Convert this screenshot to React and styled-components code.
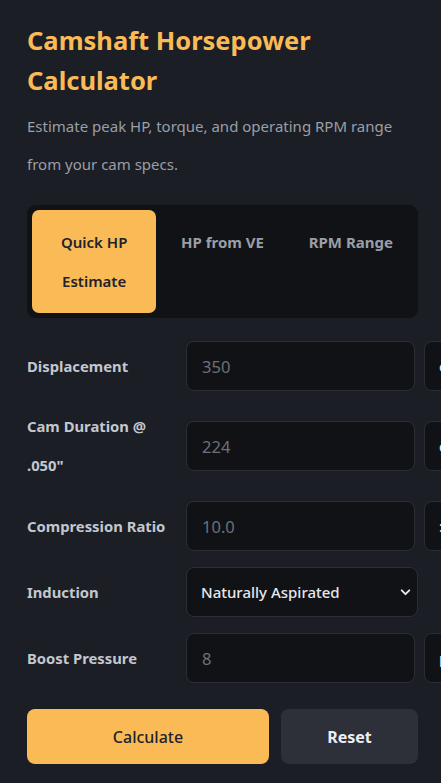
import React, { useState } from 'react';
import styled, { createGlobalStyle } from 'styled-components';

const pageBg = '#1b1e25';
const panelBg = '#111216';
const fieldBorder = '#2b2e36';
const accent = '#fabb57';
const darkText = '#20232a';
const labelColor = '#c4c7ce';
const mutedColor = '#9a9ea7';

const GlobalStyle = createGlobalStyle`
  html, body {
    margin: 0;
    background: ${pageBg};
    overflow-x: hidden;
  }
  body {
    font-family: "Noto Sans", "Open Sans", sans-serif;
  }
  * {
    box-sizing: border-box;
  }
`;

const Page = styled.div`
  padding: 20px 23px 24px 27px;
  min-height: 783px;
`;

const Title = styled.h1`
  margin: 0;
  color: ${accent};
  font-size: 25.5px;
  font-weight: 700;
  line-height: 40px;
`;

const Subtitle = styled.p`
  margin: 7px 0 0;
  color: ${mutedColor};
  font-size: 15px;
  line-height: 38px;
`;

const Tabs = styled.div`
  display: flex;
  gap: 4px;
  margin-top: 22px;
  padding: 5px;
  background: ${panelBg};
  border-radius: 9px;
`;

const Tab = styled.button`
  flex: 1;
  padding: 13px 6px 12px;
  border: none;
  border-radius: 7px;
  background: ${(p) => (p.$active ? accent : 'transparent')};
  color: ${(p) => (p.$active ? darkText : mutedColor)};
  font-family: inherit;
  font-size: 15px;
  font-weight: ${(p) => (p.$active ? 600 : 700)};
  line-height: 39px;
  display: flex;
  align-items: flex-start;
  justify-content: center;
  text-align: center;
`;

const Form = styled.div`
  display: flex;
  flex-direction: column;
  gap: 16px;
  margin-top: 23px;
`;

const Row = styled.div`
  display: flex;
  align-items: center;
`;

const Label = styled.label`
  flex: 0 0 150px;
  margin-right: 9px;
  color: ${labelColor};
  font-size: 14.8px;
  font-weight: 700;
  line-height: 39px;
`;

const Field = styled.input`
  flex: none;
  width: 229px;
  min-width: 229px;
  height: 50px;
  padding: 0 15px;
  background: ${panelBg};
  border: 1px solid ${fieldBorder};
  border-radius: 8px;
  color: #e6e8ec;
  font-family: inherit;
  font-size: 16.5px;
  outline: none;

  &::placeholder {
    color: #6d7078;
  }
`;

const UnitSelect = styled.select`
  flex: none;
  width: 80px;
  min-width: 80px;
  margin-left: 9px;
  height: 50px;
  padding: 0 14px;
  background: ${panelBg};
  border: 1px solid ${fieldBorder};
  border-radius: 8px;
  color: #e6e8ec;
  font-family: inherit;
  font-size: 15px;
  font-weight: 500;
  appearance: none;
  outline: none;
`;

const SelectWrap = styled.div`
  position: relative;
  flex: 1;
  display: flex;
`;

const WideSelect = styled.select`
  flex: 1;
  height: 50px;
  padding: 0 14px;
  background: ${panelBg};
  border: 1px solid ${fieldBorder};
  border-radius: 8px;
  color: #e6e8ec;
  font-family: inherit;
  font-size: 15px;
  font-weight: 500;
  appearance: none;
  outline: none;
`;

const Chevron = styled.svg`
  position: absolute;
  right: 6px;
  top: 50%;
  transform: translateY(-50%);
  pointer-events: none;
`;

const Actions = styled.div`
  display: flex;
  gap: 12px;
  margin-top: 26px;
`;

const Button = styled.button`
  flex: ${(p) => (p.$primary ? '1' : '0 0 137px')};
  height: 55px;
  border: none;
  border-radius: 8px;
  background: ${(p) => (p.$primary ? accent : '#2d3039')};
  color: ${(p) => (p.$primary ? darkText : '#eceef2')};
  font-family: inherit;
  font-size: 16px;
  font-weight: ${(p) => (p.$primary ? 500 : 700)};
`;

const tabs = ['Quick HP Estimate', 'HP from VE', 'RPM Range'];

const fields = [
  { label: 'Displacement', value: '350', unit: 'ci' },
  { label: 'Cam Duration @ .050"', value: '224', unit: 'deg' },
  { label: 'Compression Ratio', value: '10.0', unit: ':1' },
];

export default function App() {
  const [active, setActive] = useState(0);

  return (
    <Page>
      <GlobalStyle />
      <Title>Camshaft Horsepower Calculator</Title>
      <Subtitle>Estimate peak HP, torque, and operating RPM range from your cam specs.</Subtitle>

      <Tabs>
        {tabs.map((t, i) => (
          <Tab key={t} $active={i === active} onClick={() => setActive(i)}>
            {t}
          </Tab>
        ))}
      </Tabs>

      <Form>
        {fields.map((f) => (
          <Row key={f.label}>
            <Label>{f.label}</Label>
            <Field placeholder={f.value} />
            <UnitSelect>
              <option>{f.unit}</option>
            </UnitSelect>
          </Row>
        ))}
        <Row>
          <Label>Induction</Label>
          <SelectWrap>
            <WideSelect>
              <option>Naturally Aspirated</option>
              <option>Supercharged</option>
              <option>Turbocharged</option>
            </WideSelect>
            <Chevron width="13" height="13" viewBox="0 0 24 24" fill="none" stroke="#e6e8ec" strokeWidth="3.5" strokeLinecap="round" strokeLinejoin="round">
              <path d="M5 9l7 7 7-7" />
            </Chevron>
          </SelectWrap>
        </Row>
        <Row>
          <Label>Boost Pressure</Label>
          <Field placeholder="8" />
          <UnitSelect>
            <option>psi</option>
          </UnitSelect>
        </Row>
      </Form>

      <Actions>
        <Button $primary>Calculate</Button>
        <Button>Reset</Button>
      </Actions>
    </Page>
  );
}
